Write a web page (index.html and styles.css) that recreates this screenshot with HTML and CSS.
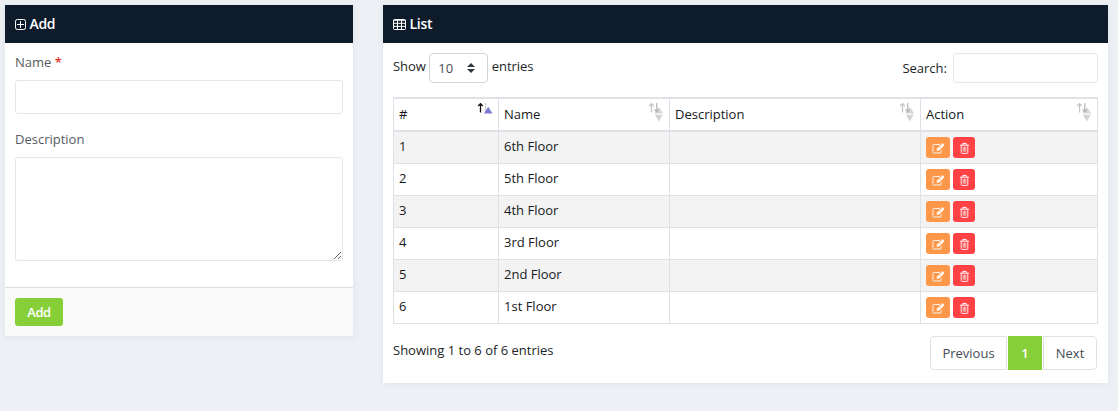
FILE: index.html
```html
<!DOCTYPE html>
<html lang="en">
<head>
<meta charset="utf-8">
<title>Floors</title>
<link rel="stylesheet" href="styles.css">
</head>
<body>
<svg class="defs" width="0" height="0" aria-hidden="true">
  <symbol id="edit" viewBox="0 0 13 12"><g fill="none" stroke="#fff"><path d="M7.6 2.5H2.2Q.9 2.5.9 3.8V9.7Q.9 11 2.2 11H8Q9.3 11 9.3 9.7V8" stroke-width=".9"/></g><path d="M4.6 8.7L5 6.5 10.4 1.1 12.5 3.2 7 8.5Z" fill="#fff"/><path d="M6.4 6.6L9.8 3.2" stroke="#ff974b" stroke-width=".6"/></symbol>
  <symbol id="trash" viewBox="0 0 11 12"><g fill="none" stroke="#fff"><path d="M1 3.2H10M3.8 3V1.4H7.2V3"/><path d="M2.2 3.2V10.5Q2.2 11.4 3.1 11.4H7.9Q8.8 11.4 8.8 10.5V3.2" stroke-width=".9"/><path d="M4.2 4.8V9.6M5.5 4.8V9.6M6.8 4.8V9.6" stroke-width=".7"/></g></symbol>
  <symbol id="sort" viewBox="0 0 16 20"><path d="M3.5 10.5V1.5M1.2 4L3.5 1.7 5.8 4" fill="none" stroke="#c4c4c4" stroke-width="1.2"/><path d="M6.3 11.5L10.8 5 15.3 11.5Z" fill="#d8d8d8"/><path d="M6.8 12.7H14.8L10.8 19.5Z" fill="#d4d4d4"/><path d="M8.7 1V10M6.6 7.5L8.7 9.8 10.8 7.5" fill="none" stroke="#b4b4b4" stroke-width="1.2"/></symbol>
  <symbol id="asc" viewBox="0 0 16 20"><path d="M3.5 10.5V1.5M1.2 4L3.5 1.7 5.8 4" fill="none" stroke="#111" stroke-width="1.3"/><path d="M8.7 1V10.5" stroke="#c4c4c4"/><path d="M7 11.5L11.2 4.8 15.4 11.5Z" fill="#7b7bd5"/></symbol>
</svg>
<main class="page">
  <form class="card add">
    <h2 class="head"><svg class="plus" viewBox="0 0 11 11"><rect x=".5" y=".5" width="10" height="10" rx="1.8"/><path d="M5.5 2V9M2 5.5H9"/></svg>Add</h2>
    <div class="fields">
      <label class="label" for="name">Name <b class="req">*</b></label>
      <input class="control" id="name" type="text">
      <label class="label" for="desc">Description</label>
      <textarea class="control area" id="desc"></textarea>
    </div>
    <div class="foot"><button class="btn" type="button">Add</button></div>
  </form>
  <section class="card list">
    <h2 class="head"><svg class="grid-icon" viewBox="0 0 13 11"><rect x=".5" y=".5" width="12" height="10" rx="1"/><path d="M.5 1.3H12.5M.5 4.3H12.5M.5 7.4H12.5M4.5 1V10.5M8.5 1V10.5"/></svg>List</h2>
    <div class="body">
      <div class="tools">
        <label class="length">Show <span class="select">10<svg viewBox="0 0 8 10"><path d="M4 0L8 4H0ZM4 10L8 6H0Z"/></svg></span> entries</label>
        <label class="search">Search:<input class="control" type="search"></label>
      </div>
      <table class="table">
        <colgroup><col class="c1"><col class="c2"><col class="c3"><col class="c4"></colgroup>
        <thead><tr>
          <th><div class="th">#<svg class="sort"><use href="#asc"/></svg></div></th>
          <th><div class="th">Name<svg class="sort"><use href="#sort"/></svg></div></th>
          <th><div class="th">Description<svg class="sort"><use href="#sort"/></svg></div></th>
          <th><div class="th">Action<svg class="sort"><use href="#sort"/></svg></div></th>
        </tr></thead>
        <tbody>
          <tr><td>1</td><td>6th Floor</td><td></td><td><div class="acts"><a class="edit"><svg><use href="#edit"/></svg></a><a class="del"><svg><use href="#trash"/></svg></a></div></td></tr>
          <tr><td>2</td><td>5th Floor</td><td></td><td><div class="acts"><a class="edit"><svg><use href="#edit"/></svg></a><a class="del"><svg><use href="#trash"/></svg></a></div></td></tr>
          <tr><td>3</td><td>4th Floor</td><td></td><td><div class="acts"><a class="edit"><svg><use href="#edit"/></svg></a><a class="del"><svg><use href="#trash"/></svg></a></div></td></tr>
          <tr><td>4</td><td>3rd Floor</td><td></td><td><div class="acts"><a class="edit"><svg><use href="#edit"/></svg></a><a class="del"><svg><use href="#trash"/></svg></a></div></td></tr>
          <tr><td>5</td><td>2nd Floor</td><td></td><td><div class="acts"><a class="edit"><svg><use href="#edit"/></svg></a><a class="del"><svg><use href="#trash"/></svg></a></div></td></tr>
          <tr><td>6</td><td>1st Floor</td><td></td><td><div class="acts"><a class="edit"><svg><use href="#edit"/></svg></a><a class="del"><svg><use href="#trash"/></svg></a></div></td></tr>
        </tbody>
      </table>
      <div class="bottom">
        <span class="info">Showing 1 to 6 of 6 entries</span>
        <nav class="pages"><a class="prev">Previous</a><a class="current">1</a><a class="next">Next</a></nav>
      </div>
    </div>
  </section>
</main>
</body>
</html>
```

FILE: styles.css
```css
* { box-sizing: border-box; }
body { margin: 0; background: #edf1f5; color: #212529; font: 13px/20px "Open Sans", sans-serif; }
.defs { display: block; height: 0; }
.page { display: flex; align-items: flex-start; gap: 30px; padding: 5px; }
.card { background: #fff; box-shadow: 0 1px 6px 1px rgba(69, 65, 78, .06); }
.add { width: 348px; }
.list { width: 725px; height: 378px; }
.head { display: flex; align-items: center; height: 38px; margin: 0; padding: 0 10px; background: #0d1b2b; color: #fff; font-size: 14px; font-weight: 600; letter-spacing: -.3px; }
.head svg { fill: none; stroke: #fff; margin-right: 3.5px; }
.plus { width: 11px; height: 11px; }
.grid-icon { width: 13px; height: 11px; }
.fields { height: 244px; padding: 9px 10px 0; }
.label { display: block; height: 28px; color: #545b62; }
.req { color: #d33; font-weight: 600; }
.control { display: block; width: 100%; height: 34px; margin: 0; border: 1px solid #e2e7eb; border-radius: 3px; background: #fff; outline: 0; appearance: none; }
.fields input { margin-bottom: 15px; }
.area { height: 104px; resize: vertical; }
.foot { height: 49px; padding: 10px; border-top: 1px solid #dcdfe2; background: #fafafa; }
.btn { display: block; width: 48px; height: 28px; padding: 0; border: 0; border-radius: 3px; background: #86cf38; color: #fff; font: 600 13px/28px "Open Sans", sans-serif; letter-spacing: -.4px; }
.body { padding: 10px; }
.tools { display: flex; justify-content: space-between; height: 44px; }
.length { display: flex; gap: 3.5px; height: 30px; line-height: 27px; letter-spacing: -.05px; }
.select { display: flex; justify-content: space-between; align-items: center; width: 59px; height: 30px; padding: 0 12px 0 8px; border: 1px solid #ced4da; border-radius: 4px; color: #495057; line-height: 28px; }
.select svg { width: 8px; height: 10px; fill: #343a40; }
.search { display: flex; gap: 6px; line-height: 31px; }
.search .control { width: 145px; height: 30px; }
.table { width: 705px; table-layout: fixed; border-collapse: separate; border-spacing: 0; border-left: 1px solid #dee2e6; color: #16191c; }
.c1 { width: 105px; }
.c2 { width: 171px; }
.c3 { width: 251px; }
.c4 { width: 177px; }
.table th { height: 35px; padding: 0 5px; border: solid #dee2e6; border-width: 2px 1px 2px 0; font-weight: 400; text-align: left; }
.th { display: flex; justify-content: space-between; height: 31px; line-height: 31px; }
.sort { width: 16px; height: 20px; margin: 3px 0 0; }
.table td { height: 32px; padding: 0 5px; border: solid #dee2e6; border-width: 0 1px 1px 0; vertical-align: top; line-height: 29px; }
.table tbody tr:nth-child(odd) { background: #f3f3f3; }
.acts { display: flex; gap: 3px; padding-top: 5px; }
.edit, .del { display: flex; align-items: flex-start; justify-content: center; height: 21px; border-radius: 3px; padding-top: 5px; }
.edit { width: 24px; background: #ff974b; }
.edit svg { width: 13px; height: 12px; }
.del { width: 22px; background: #ff4245; }
.del svg { width: 11px; height: 12px; }
.bottom { display: flex; justify-content: space-between; padding: 12px 1px 0 0; }
.info { line-height: 29px; }
.pages { display: flex; height: 34px; line-height: 33px; text-align: center; color: #444b52; }
.prev, .next { border: 1px solid #dee2e6; }
.prev { width: 77px; border-radius: 4px 0 0 4px; }
.next { width: 54px; border-radius: 0 4px 4px 0; }
.current { width: 34px; margin: 0 1px; background: #86cf38; color: #fff; font-weight: 600; line-height: 35px; }
```
